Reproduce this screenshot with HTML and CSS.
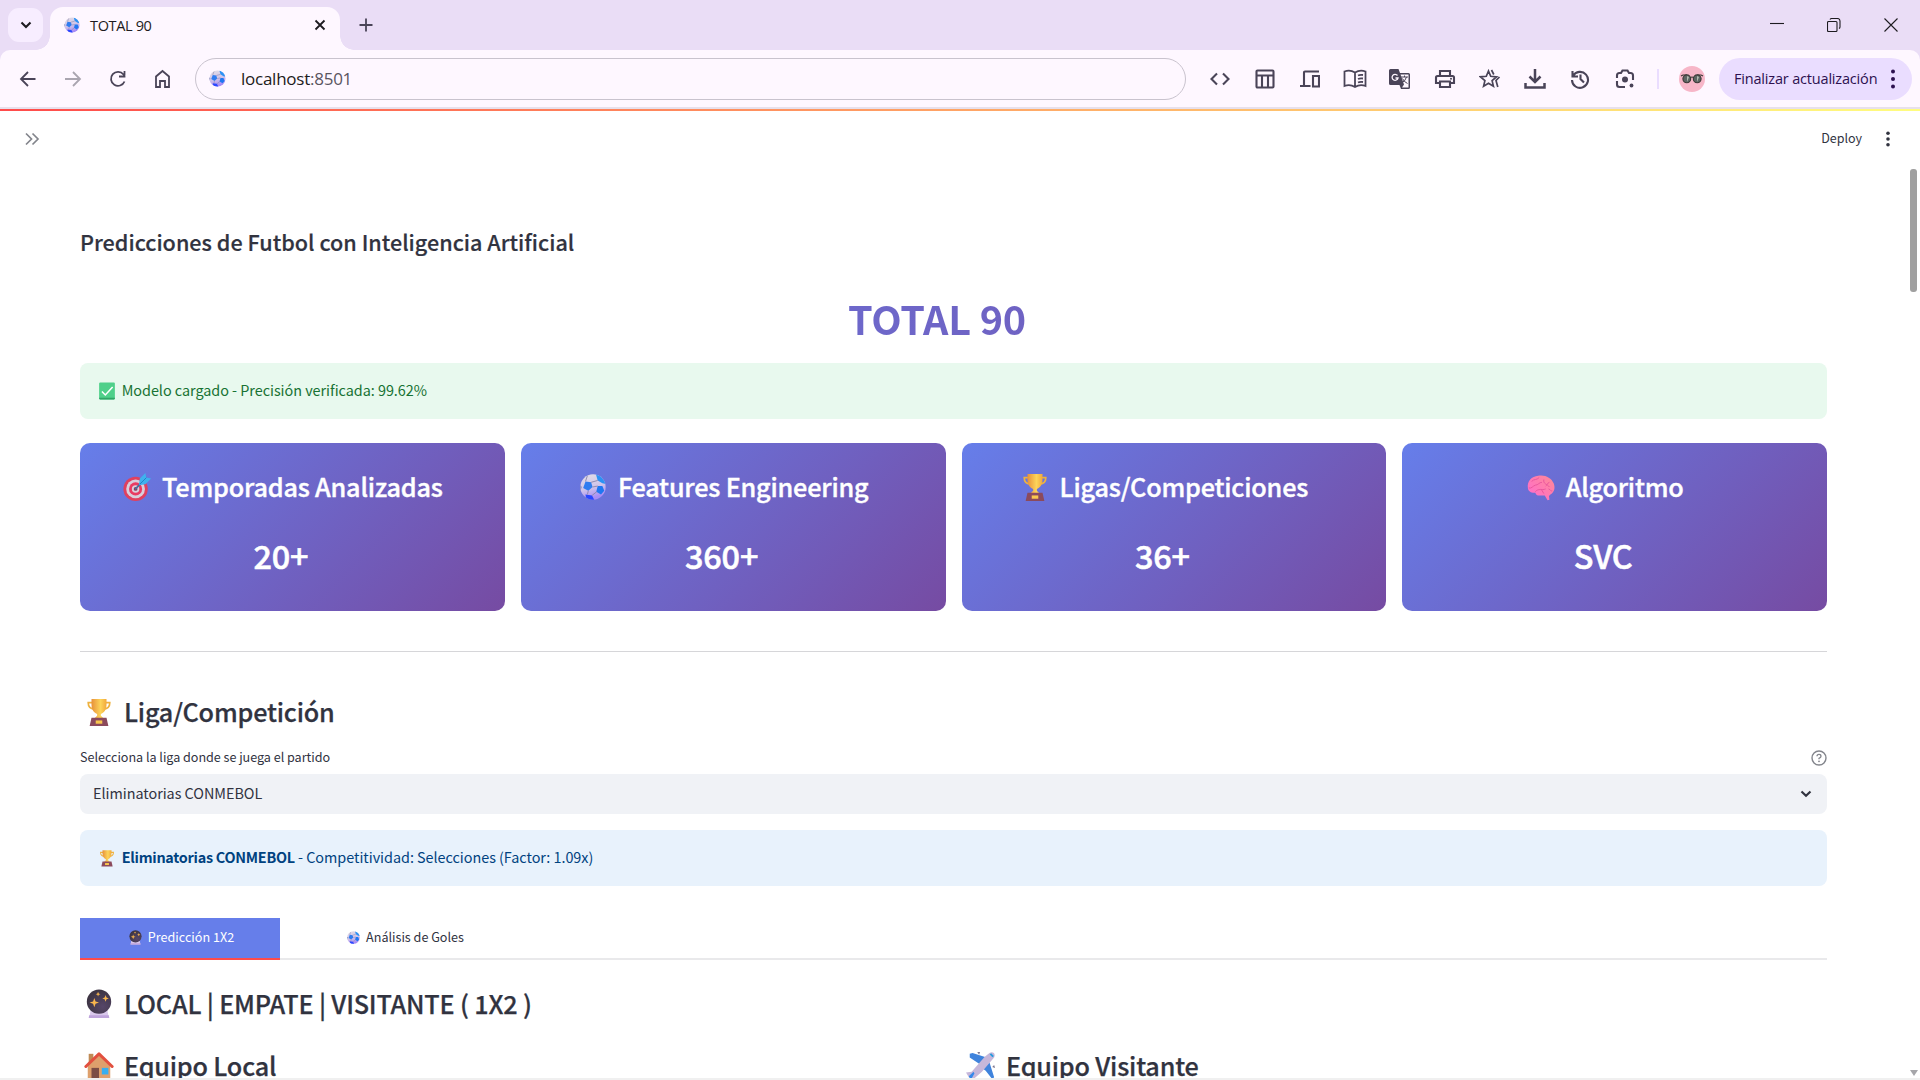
FILE: index.html
```html
<!DOCTYPE html>
<html lang="es">
<head>
<meta charset="utf-8">
<title>TOTAL 90</title>
<link rel="stylesheet" href="styles.css">
</head>
<body>
<svg class="defs" aria-hidden="true">
  <defs>
    <linearGradient id="gold"><stop offset="0" stop-color="#e8913a"/><stop offset=".6" stop-color="#fcd45a"/><stop offset="1" stop-color="#f2a93b"/></linearGradient>
    <linearGradient id="ballg" x1="0" y1="0" x2=".3" y2="1"><stop offset="0" stop-color="#e3e0e6"/><stop offset=".6" stop-color="#cfc3ea"/><stop offset="1" stop-color="#a78cf5"/></linearGradient>
    <radialGradient id="orb" cx=".65" cy=".7" r=".7"><stop offset="0" stop-color="#564668"/><stop offset="1" stop-color="#3c3442"/></radialGradient>
    <linearGradient id="pink" x1="1" y1="0" x2="0" y2="1"><stop offset="0" stop-color="#ff8a94"/><stop offset="1" stop-color="#ff6ad2"/></linearGradient>
    <clipPath id="ballclip"><circle cx="16" cy="16" r="13.5"/></clipPath>
    <symbol id="ball" viewBox="0 0 32 32">
      <circle cx="16" cy="16" r="13.5" fill="url(#ballg)"/>
      <g clip-path="url(#ballclip)">
        <path d="M8 10l6 1 1.500 5-4.500 4-5.500-3z" fill="#2f7cf0"/>
        <path d="M19 2l8 3 4 8-5-1-5-3z" fill="#2b92f5"/>
        <path d="M21 15l5 0 2 5-3.500 4-5-3z" fill="#1f77f2"/>
        <path d="M8 24l7 1 3 6-9 0z" fill="#2b48ff"/>
        <path d="M1 12l3 4-2 6z" fill="#7c86b5"/>
        <path d="M14 11l7-2M15.500 16l5.500-1M11 20l-1 4M20 21l-5 4M8 10l2-6" stroke="#8d88ad" stroke-width="1" fill="none"/>
      </g>
    </symbol>
    <symbol id="trophy" viewBox="0 0 32 32">
      <path d="M9 6H4.500C4.500 11 7 12.500 11 13M23 6h4.500C27.500 11 25 12.500 21 13" fill="none" stroke="#eeb23f" stroke-width="1.800"/>
      <path d="M8 2h16v6c0 6-3 9-6 10v2l3 3H11l3-3v-2c-3-1-6-4-6-10z" fill="url(#gold)"/>
      <path d="M8 22h16l2 9H6z" fill="#8b4a5c"/><rect x="12.500" y="25" width="7" height="3.500" fill="#f9c74e"/>
    </symbol>
    <symbol id="target" viewBox="0 0 32 32">
      <circle cx="14.500" cy="18" r="13" fill="#e0405f"/><circle cx="14.500" cy="18" r="10" fill="#d8cfdc"/><circle cx="14.500" cy="18" r="7" fill="#e93b62"/><circle cx="14.500" cy="18" r="4" fill="#d8cfdc"/><circle cx="14.500" cy="18" r="2" fill="#8c3a58"/>
      <path d="M14 18.500L21 11" stroke="#4a6f9d" stroke-width="1.800"/><path d="M18 14l1-7 6-6 .8 4.800L31 7l-6 6z" fill="#3fb1ee"/><path d="M19 13l7-7" stroke="#1d7fc5"/>
    </symbol>
    <symbol id="brain" viewBox="0 0 32 32">
      <path d="M2 17C1 10 6 4.500 13 4c7-1.500 14 2 16.500 8 2 5 .5 10-3.500 12l-1.500 1.500.5 4-2 .5-3-5H13c-1.500 0-3-2-3-3-4 .5-7.500-1-8-5z" fill="url(#pink)"/>
      <path d="M3 17c3 1 4-2 7-3 3 0 4-3 7-3M6 10c3-3 5-1 8-4M10 21c3-4 7-1 11-3M19 8c-1 5 4 5 6 8M25 11c-3 1-2 3-4 4M16 18l3 5M24 18c3 1 2 3 4 2" fill="none" stroke="#e8559c" stroke-width="1"/>
    </symbol>
    <symbol id="crystal" viewBox="0 0 32 32">
      <path d="M7 23h18l1.500 8h-21z" fill="#d9c8ec"/><path d="M5.500 28h21l.5 3H5z" fill="#bfa5dc"/>
      <circle cx="16" cy="13.500" r="13" fill="url(#orb)"/>
      <path d="M11 9.500l1.300 3.700L16 14.500l-3.700 1.300L11 19.500l-1.300-3.700L6 14.500l3.700-1.300zM23 6.500l1 2.500 2.500 1-2.500 1-1 2.500-1-2.500-2.500-1 2.500-1zM15 3l.7 1.800 1.800.7-1.800.7L15 8l-.7-1.800-1.800-.7 1.800-.7z" fill="#f9b64d"/>
    </symbol>
    <symbol id="house" viewBox="0 0 32 32">
      <path d="M5 3h5v10H5z" fill="#c08a55"/><path d="M4 15L16 4l12 11v15H4z" fill="#dea06c"/><path d="M2 29h28v3H2z" fill="#5e9b57"/>
      <path d="M2 16.500L16 3l14 13.500" fill="none" stroke="#e2503f" stroke-width="3.200" stroke-linecap="round" stroke-linejoin="round"/>
      <rect x="8" y="18" width="8" height="12" fill="#7c4d45"/><rect x="19" y="18" width="7" height="7" fill="#35aef0"/>
    </symbol>
    <symbol id="plane" viewBox="0 0 32 32">
      <path d="M4 3l3-1 15 5-6 8L4 7zM30 28l-2 2-7-9-4-3 8-6z" fill="#3f83dc"/><path d="M12 1l3 0-1 3zM30 15l1 3-3-1z" fill="#7c7790"/>
      <path d="M25 2c4-2 7 1 5 5L17 22 8 30l-5-2-3-5 6-1L20 6z" fill="#c6b7da"/><path d="M3 27l5-5 1 2-4 7z" fill="#3488ea"/><path d="M26 3l3 3" stroke="#249cde" stroke-width="2"/>
    </symbol>
    <symbol id="check" viewBox="0 0 32 32"><rect x="2" y="1" width="28" height="30" rx="2" fill="#4fd08a"/><path d="M2 28h28v1.500q0 1.500-2 1.500H4q-2 0-2-1.500z" fill="#30a566"/><path d="M7 17l6 6L26 9" fill="none" stroke="#fff" stroke-width="2.800"/></symbol>
  </defs>
</svg>

<header class="browser">
  <div class="tabstrip">
    <div class="tabsearch"><svg viewBox="0 0 12 12" width="12" height="12"><path d="M1.500 3.500L6 8l4.500-4.500" class="ln dark w2"/></svg></div>
    <div class="tab">
      <svg class="fav" width="18" height="18"><use href="#ball"/></svg>
      <span class="tabtitle">TOTAL 90</span>
      <svg class="tabclose" viewBox="0 0 12 12" width="12" height="12"><path d="M1.500 1.500l9 9M10.500 1.500l-9 9" class="ln dark"/></svg>
    </div>
    <svg class="newtab" viewBox="0 0 14 14" width="14" height="14"><path d="M7 .5v13M.5 7h13" class="ln"/></svg>
    <div class="winbtns">
      <svg viewBox="0 0 14 14" width="14" height="14"><path d="M0 5.500h14" class="thin"/></svg>
      <svg viewBox="0 0 14 14" width="14" height="14"><path d="M.5 4.500q0-1 1-1H9q1 0 1 1V12.500q0 1-1 1H1.500q-1 0-1-1zM3 1.500Q3.500.5 4.500.5h6Q13 .5 13 3v6q0 1-1 1.500" class="thin"/></svg>
      <svg viewBox="0 0 14 14" width="14" height="14"><path d="M.5.5l13 13M13.500.5l-13 13" class="thin"/></svg>
    </div>
  </div>
  <div class="toolbar">
    <div class="nav">
      <svg viewBox="0 0 20 20" width="20" height="20"><path d="M17.500 10H3M10 3l-7 7 7 7" class="ln"/></svg>
      <svg viewBox="0 0 20 20" width="20" height="20"><path d="M2 10h15M10 3l7 7-7 7" class="ln dim"/></svg>
      <svg viewBox="0 0 20 20" width="20" height="20"><path d="M16.500 12.500A7 7 0 1 1 15.500 5.500L17 7M16.500 2v5.500H11" class="ln"/></svg>
      <svg viewBox="0 0 20 20" width="20" height="20"><path d="M3 18V7.500L9.500 2 16 7.500V18h-4v-6H7v6z" class="ln"/></svg>
    </div>
    <div class="url"><svg width="19" height="19"><use href="#ball"/></svg><span>localhost<i>:8501</i></span></div>
    <div class="tools">
      <svg viewBox="0 0 20 20" width="20" height="20"><path d="M7 4.500L1.500 10l5.500 5.500M13 4.500l5.500 5.500L13 15.500" class="ln w2"/></svg>
      <svg viewBox="0 0 20 20" width="20" height="20"><path d="M2.500 1.500h15q1 0 1 1v15q0 1-1 1h-15q-1 0-1-1v-15q0-1 1-1zM1.500 6.500h17M7 6.500v12M13 6.500v12" class="ln w2"/></svg>
      <svg viewBox="0 0 20 20" width="20" height="20"><path d="M19 2.500H5Q4 2.500 4 3.500V17M0 17h10.500M13 7h6v10.500h-6z" class="ln w2"/></svg>
      <svg viewBox="0 0 24 20" width="24" height="20"><path d="M12 3.500Q7 .5 1.500 2.500v14.500Q7 15 12 18Q17 15 22.500 17V2.500Q17 .5 12 3.500zV18M15 6.500q2-1 5-.5M15 10q2-1 5-.5M15 13.500q2-1 5-.5" class="ln"/></svg>
      <svg viewBox="0 0 22 22" width="22" height="22"><path d="M1.500 1h8l1.500 4h8.500q1.500 0 1.500 1.500v13q0 1.500-1.500 1.500H12l-1.500-4h-9Q0 17 0 15.500v-13Q0 1 1.500 1z" fill="#4a4458"/><path d="M11.500 6.500H19.500v13H13l2-3z" fill="#fef7ff"/><path d="M8.500 7.500A3 3 0 1 0 9 10H6.500" fill="none" stroke="#fef7ff" stroke-width="1.300"/><path d="M12 9h7M15.500 7.500V9M17.500 9q-1 4-5 6M13.500 10.500q1 3 5 5" class="ln w1"/></svg>
      <svg viewBox="0 0 22 20" width="22" height="20"><path d="M6 6V2h10v4M6 14H2V8.500Q2 7 3.500 7h15Q20 7 20 8.500V14h-4M6 12.500h10V18H6z" class="ln w2"/><circle cx="17" cy="9.800" r="1" fill="#4a4458"/></svg>
      <svg viewBox="0 0 22 20" width="22" height="20"><path d="M9.500 2l2.200 5.300 5.800.5-4.400 3.800 1.300 5.600-4.900-3-4.900 3 1.300-5.600L1.500 7.800l5.800-.5zM12.500 1l2.300 4.500M20.500 8L17 11.500l1.800 6.500" class="ln w15"/></svg>
      <svg viewBox="0 0 22 20" width="22" height="20"><path d="M11 0v13M5.500 7.500l5.500 5.500 5.500-5.500M1.500 14v4.500h19V14" class="ln bold"/></svg>
      <svg viewBox="0 0 20 20" width="20" height="20"><path d="M3 7A8 8 0 1 1 2 11M2.500 2v5.500H8M10.500 5.500V10l3.500 3.500" class="ln w2"/></svg>
      <svg viewBox="0 0 20 20" width="20" height="20"><path d="M2 12v3.500Q2 18 4.500 18H10M2 9V6.500Q2 4 4.500 4H6l1.500-2.500h5L14 4h1.500Q18 4 18 6.500V11" class="ln w2"/><circle cx="10" cy="10.500" r="3" fill="#4a4458"/><circle cx="16.500" cy="16.500" r="1.900" fill="#4a4458"/></svg>
    </div>
    <div class="divider"></div>
    <svg class="avatar" viewBox="0 0 26 26" width="26" height="26"><circle cx="13" cy="13" r="13" fill="#f7b6c8"/><path d="M2 10l2-1h4M24 10l-2-1h-4M11.500 11.500q1.500-1 3 0" fill="none" stroke="#3b3735" stroke-width="1.200"/><circle cx="7.800" cy="12.800" r="3.900" fill="#5d6562" stroke="#3b3735" stroke-width="1.100"/><circle cx="18.200" cy="12.800" r="3.900" fill="#5d6562" stroke="#3b3735" stroke-width="1.100"/><path d="M8 10l2 1-2 5zM18 10l2 1-2 5z" fill="#b4bab0"/></svg>
    <div class="update"><span>Finalizar actualización</span><svg viewBox="0 0 4 20" width="4" height="20"><g fill="#2d1150"><circle cx="2" cy="2.500" r="2"/><circle cx="2" cy="10" r="2"/><circle cx="2" cy="17.500" r="2"/></g></svg></div>
  </div>
</header>
<div class="decoration"></div>

<main class="app">
  <div class="appbar">
    <svg viewBox="0 0 16 14" width="16" height="14"><path d="M2 1.500L7.500 7 2 12.500M8.500 1.500L14 7l-5.500 5.500" fill="none" stroke="#83858c" stroke-width="1.700"/></svg>
    <span class="deploy">Deploy</span>
    <svg viewBox="0 0 4 16" width="4" height="16"><g fill="#31333f"><circle cx="2" cy="2.200" r="1.800"/><circle cx="2" cy="8" r="1.800"/><circle cx="2" cy="13.800" r="1.800"/></g></svg>
  </div>
  <div class="content">
    <h3 class="subtitle"><span>Predicciones de Futbol con Inteligencia Artificial</span></h3>
    <h1 class="brand"><span>TOTAL 90</span></h1>
    <div class="alert ok"><svg width="18" height="18"><use href="#check"/></svg><span>Modelo cargado - Precisión verificada: 99.62%</span></div>
    <div class="cards">
      <div class="card"><h2><svg width="30" height="30"><use href="#target"/></svg><span>Temporadas Analizadas</span></h2><p>20+</p></div>
      <div class="card"><h2><svg width="30" height="30"><use href="#ball"/></svg><span>Features Engineering</span></h2><p>360+</p></div>
      <div class="card"><h2><svg width="30" height="30"><use href="#trophy"/></svg><span>Ligas/Competiciones</span></h2><p>36+</p></div>
      <div class="card"><h2><svg width="30" height="30"><use href="#brain"/></svg><span>Algoritmo</span></h2><p>SVC</p></div>
    </div>
    <hr>
    <h2 class="section liga"><svg width="30" height="30"><use href="#trophy"/></svg><span>Liga/Competición</span></h2>
    <div class="label"><span>Selecciona la liga donde se juega el partido</span><svg viewBox="0 0 16 16" width="16" height="16"><circle cx="8" cy="8" r="7" fill="none" stroke="#83858c" stroke-width="1.400"/><path d="M6 6.300Q6 4.400 8 4.400T10 6.200Q10 7.300 8 8.300V9.300" fill="none" stroke="#83858c" stroke-width="1.300"/><circle cx="8" cy="11.300" r=".9" fill="#83858c"/></svg></div>
    <div class="select"><span>Eliminatorias CONMEBOL</span><svg viewBox="0 0 12 8" width="12" height="8"><path d="M1.500 1.500L6 5.700l4.500-4.200" fill="none" stroke="#31333f" stroke-width="2.200"/></svg></div>
    <div class="alert info"><svg width="18" height="18"><use href="#trophy"/></svg><span><b>Eliminatorias CONMEBOL</b> - Competitividad: Selecciones (Factor: 1.09x)</span></div>
    <div class="tabs">
      <div class="apptab active"><svg width="15" height="15"><use href="#crystal"/></svg><span>Predicción 1X2</span></div>
      <div class="apptab"><svg width="15" height="15"><use href="#ball"/></svg><span>Análisis de Goles</span></div>
    </div>
    <h2 class="section local"><svg width="30" height="30"><use href="#crystal"/></svg><span>LOCAL | EMPATE | VISITANTE ( 1X2 )</span></h2>
    <div class="teams">
      <h2 class="section"><svg width="30" height="30"><use href="#house"/></svg><span>Equipo Local</span></h2>
      <h2 class="section"><svg width="30" height="30"><use href="#plane"/></svg><span>Equipo Visitante</span></h2>
    </div>
  </div>
  <div class="thumb"></div>
  <div class="arrow"></div>
</main>
</body>
</html>
```
FILE: styles.css
```css
* { box-sizing: border-box; }
html, body { margin: 0; height: 1080px; overflow: hidden; }
body { display: flex; flex-direction: column; background: #fff; color: #31333f; font-family: "Noto Sans CJK SC", "Noto Sans", sans-serif; border-bottom: 2px solid #f0f0f0; }
h1, h2, h3, p { margin: 0; }
svg { display: block; flex: none; }
span { white-space: nowrap; }
.defs { position: absolute; width: 0; height: 0; }
.ln { fill: none; stroke: #4a4458; stroke-width: 1.8; }
.dark { stroke: #1d1b20; }
.dim { stroke: #aaa5b0; }
.w1 { stroke-width: 1; }
.w15 { stroke-width: 1.7; }
.w2 { stroke-width: 2.1; }
.bold { stroke-width: 2.5; }
.thin { fill: none; stroke: #1d1b20; stroke-width: 1.1; }

.browser { flex: none; background: #eaddf6; font-family: "Open Sans", "Noto Sans", sans-serif; }
.tabstrip { height: 50px; display: flex; align-items: center; padding-left: 8px; }
.tabsearch { width: 35px; height: 34px; border-radius: 11px; background: #f7edff; display: flex; align-items: center; justify-content: center; }
.tab { position: relative; margin-left: 7px; width: 290px; height: 43px; align-self: flex-end; border-radius: 13px 13px 0 0; background: #fef7ff; display: flex; align-items: center; padding: 0 14px 7px 13px; }
.tab::before, .tab::after { content: ""; position: absolute; bottom: 0; width: 14px; height: 14px; }
.tab::before { left: -14px; background: radial-gradient(circle at 0 0, transparent 13.5px, #fef7ff 14px); }
.tab::after { right: -14px; background: radial-gradient(circle at 100% 0, transparent 13.5px, #fef7ff 14px); }
.tabtitle { margin-left: 9px; font-size: 14.5px; letter-spacing: -.35px; color: #1d1b20; flex: 1; }
.newtab { margin-left: 19px; }
.winbtns { margin-left: auto; display: flex; gap: 43px; padding-right: 22px; }
.toolbar { height: 59px; background: #fef7ff; border-bottom: 2px solid #e7e0ec; border-radius: 10px 10px 0 0; display: flex; align-items: center; }
.nav { display: flex; gap: 25px; padding-left: 18px; width: 195px; }
.url { width: 991px; height: 42px; border: 1px solid #c9c3ce; border-radius: 21px; display: flex; align-items: center; padding-left: 12px; gap: 14px; font-size: 17px; letter-spacing: -.25px; color: #1d1b20; }
.url i { font-style: normal; color: #5a5561; }
.tools { display: grid; grid-template-columns: repeat(10, 45px); place-items: center; margin-left: 11px; }
.divider { width: 2px; height: 20px; background: #eaddff; margin-left: 10px; }
.avatar { margin-left: 20px; }
.update { margin-left: 14px; width: 193px; height: 42px; border-radius: 21px; background: #eaddff; color: #2d1150; display: flex; align-items: center; justify-content: space-between; padding: 0 17px 0 15px; font-size: 14.5px; letter-spacing: -.18px; }
.decoration { flex: none; height: 2px; background: linear-gradient(90deg, #ff4b4b, #fffd80); }

.app { position: relative; flex: 1; min-height: 0; overflow: hidden; }
.appbar { height: 58px; display: flex; align-items: center; padding: 0 30px 2px 24px; }
.deploy { margin-left: auto; margin-right: 24px; padding-bottom: 3px; font-size: 12.5px; }
.content { width: 1747px; margin-left: 80px; display: flex; flex-direction: column; }
.subtitle { margin-top: 53px; height: 41px; line-height: 40px; font-size: 21.6px; font-weight: 500; -webkit-text-stroke: .2px currentColor; }
.brand { margin-top: 25px; height: 75px; line-height: 60px; font-size: 39.6px; font-weight: 700; letter-spacing: -.2px; text-align: center; padding-right: 33px; background: linear-gradient(90deg, #667eea, #764ba2); background-clip: text; -webkit-background-clip: text; color: transparent; }
.alert { height: 56px; border-radius: 8px; display: flex; align-items: center; padding-left: 18px; gap: 5.7px; font-size: 14.4px; letter-spacing: -.03px; }
.alert span { padding-bottom: 3px; }
.alert b { letter-spacing: -.26px; }
.ok { background: #e8f9ee; color: #177233; }
.info { margin-top: 16px; background: #e8f2fc; color: #004280; }
.cards { margin-top: 24px; display: grid; grid-template-columns: repeat(4, 1fr); gap: 16px; }
.card { height: 168px; border-radius: 10px; background: linear-gradient(135deg, #667eea, #764ba2); color: #fff; text-align: center; padding: 24px 20px 0 0; }
.card h2 { height: 40px; display: flex; align-items: center; justify-content: center; gap: 10px; font-size: 25.2px; line-height: 38px; font-weight: 500; letter-spacing: -.18px; -webkit-text-stroke: .4px currentColor; }
.card h2 span { padding-bottom: 2px; }
.card p { margin-top: 24px; height: 48px; line-height: 48px; font-size: 32.4px; font-weight: 500; letter-spacing: -.2px; padding-right: 3px; -webkit-text-stroke: .55px currentColor; }
hr { width: 100%; margin: 40px 0 0; border: 0; height: 1px; background: #d6d6d9; }
.section { height: 40px; line-height: 38px; display: flex; align-items: center; font-size: 25.2px; font-weight: 500; letter-spacing: -.18px; padding-left: 4px; gap: 10px; -webkit-text-stroke: .25px currentColor; }
.section span { padding-bottom: 2px; }
.liga { margin-top: 40px; }
.label { margin-top: 16px; height: 20px; display: flex; align-items: center; justify-content: space-between; font-size: 12.6px; letter-spacing: -.03px; }
.label span { padding-bottom: 3px; }
.select { margin-top: 6px; height: 40px; border-radius: 8px; background: #f0f2f6; display: flex; align-items: center; justify-content: space-between; padding: 0 15px 0 13px; font-size: 14.4px; letter-spacing: -.03px; }
.select span { padding-bottom: 3px; }
.tabs { margin-top: 32px; height: 42px; display: flex; border-bottom: 2px solid #e9e9eb; }
.apptab { width: 200px; height: 42px; padding-bottom: 4px; display: flex; align-items: center; justify-content: center; gap: 5px; font-size: 12.6px; }
.apptab span { padding-bottom: 2px; }
.apptab + .apptab { width: 250px; }
.active { background: #667eea; color: #fff; border-bottom: 2px solid #ff4b4b; padding: 0 0 2px 2px; }
.local { margin-top: 24px; }
.teams { margin-top: 22px; display: grid; grid-template-columns: 882px 1fr; }
.thumb { position: absolute; right: 3px; top: 58px; width: 7px; height: 123px; border-radius: 3px; background: #a0a0a0; }
.arrow { position: absolute; right: 2px; bottom: 2px; border: 4px solid transparent; border-top: 6px solid #a6a6aa; border-bottom: 0; }
```
